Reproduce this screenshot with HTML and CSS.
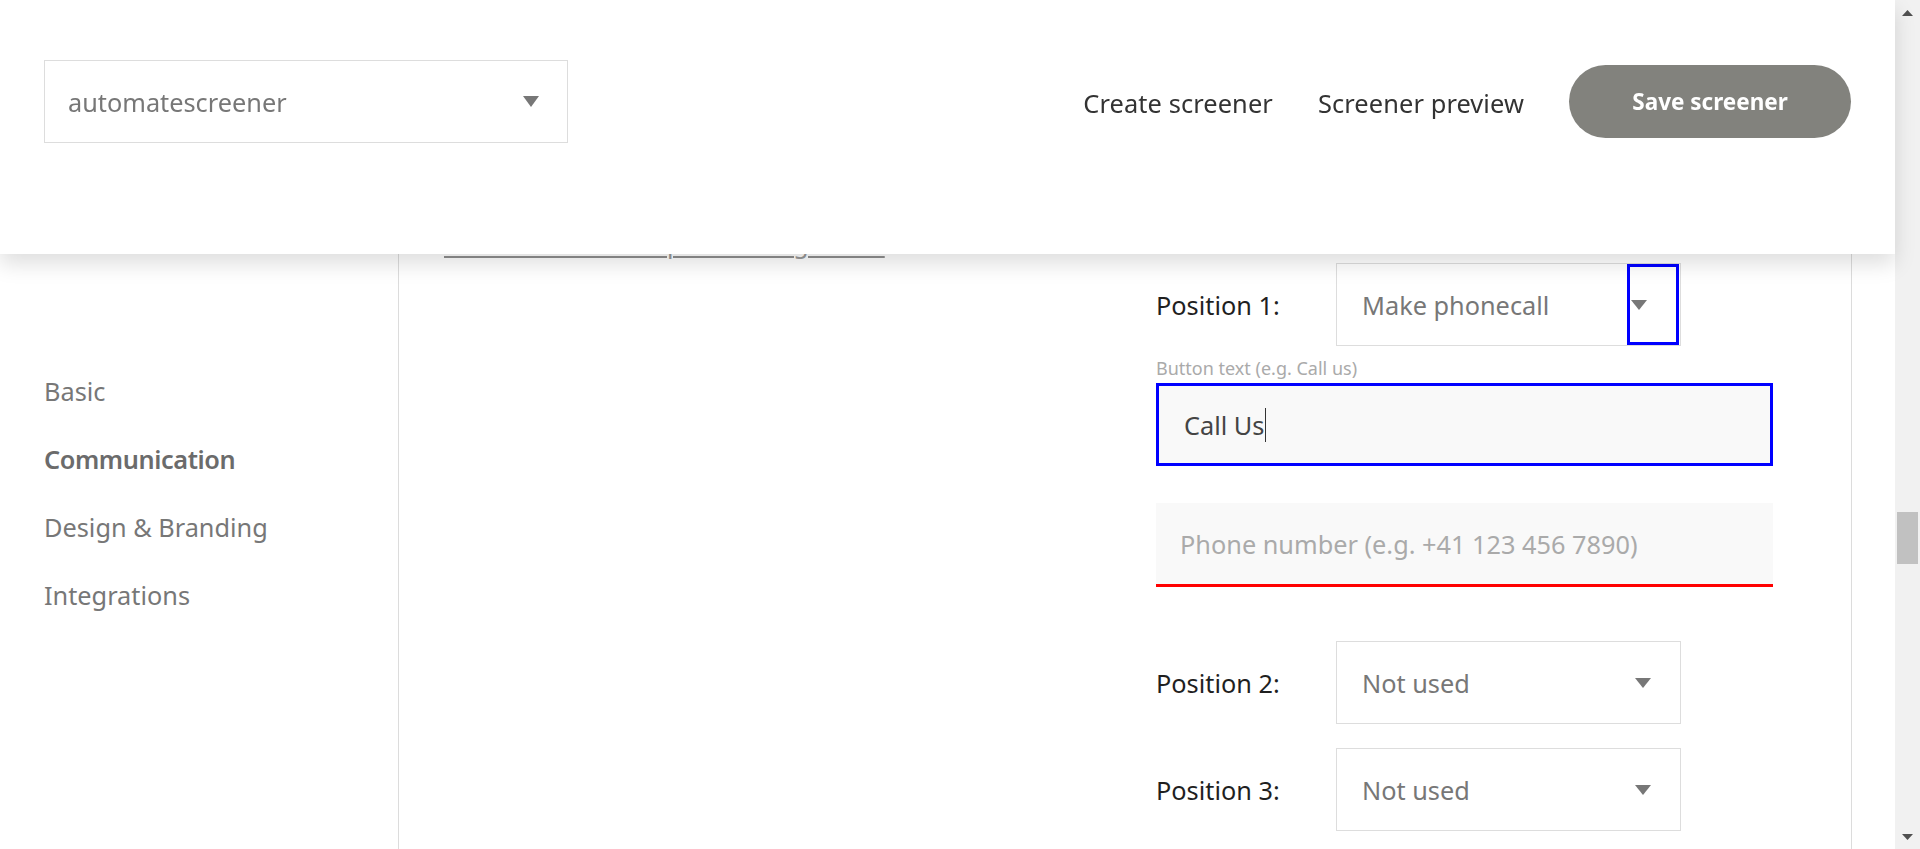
FILE: index.html
```html
<!DOCTYPE html>
<html lang="en">
<head>
<meta charset="utf-8">
<title>Screener editor – Communication</title>
<link rel="stylesheet" href="styles.css">
</head>
<body>
<div class="page">
  <nav class="sidenav">
    <a class="nav-item" href="#">Basic</a>
    <a class="nav-item active" href="#">Communication</a>
    <a class="nav-item" href="#">Design &amp; Branding</a>
    <a class="nav-item" href="#">Integrations</a>
  </nav>

  <main class="main">
    <div class="preview-col">
      <a class="help-link" href="#">Learn more about phone usage here</a>
    </div>

    <form class="form-col">
      <div class="pos-row">
        <span class="pos-label">Position 1:</span>
        <div class="select">
          <span class="select-value">Make phonecall</span>
          <span class="arrow-box focused">
            <svg class="arrow" width="16" height="10" viewBox="0 0 16 10"><polygon points="0,0 16,0 8,10"/></svg>
          </span>
        </div>
      </div>

      <label class="field-label">Button text (e.g. Call us)</label>
      <div class="text-input focused"><span class="typed">Call Us</span><span class="caret"></span></div>

      <input class="text-input invalid" type="text" placeholder="Phone number (e.g. +41 123 456 7890)">

      <div class="pos-row row-2">
        <span class="pos-label">Position 2:</span>
        <div class="select">
          <span class="select-value">Not used</span>
          <span class="arrow-box">
            <svg class="arrow" width="16" height="10" viewBox="0 0 16 10"><polygon points="0,0 16,0 8,10"/></svg>
          </span>
        </div>
      </div>

      <div class="pos-row row-3">
        <span class="pos-label">Position 3:</span>
        <div class="select">
          <span class="select-value">Not used</span>
          <span class="arrow-box">
            <svg class="arrow" width="16" height="10" viewBox="0 0 16 10"><polygon points="0,0 16,0 8,10"/></svg>
          </span>
        </div>
      </div>
    </form>
  </main>

  <div class="gutter"></div>

  <div class="scrollbar">
    <div class="sb-btn">
      <svg width="11" height="6" viewBox="0 0 11 6"><polygon points="0,6 11,6 5.5,0"/></svg>
    </div>
    <div class="sb-track"><div class="sb-thumb"></div></div>
    <div class="sb-btn">
      <svg width="11" height="6" viewBox="0 0 11 6"><polygon points="0,0 11,0 5.5,6"/></svg>
    </div>
  </div>
</div>

<header class="topbar">
  <div class="header-select">
    <span>automatescreener</span>
    <svg class="arrow" width="16" height="11" viewBox="0 0 16 11"><polygon points="0,0 16,0 8,11"/></svg>
  </div>
  <div class="header-actions">
    <a class="header-link" href="#">Create screener</a>
    <a class="header-link" href="#">Screener preview</a>
    <button class="save-btn" type="button">Save screener</button>
  </div>
</header>
</body>
</html>
```

FILE: styles.css
```css
html, body {
  margin: 0;
  padding: 0;
}

body {
  font-family: "Noto Sans", "Open Sans", sans-serif;
  background: #ffffff;
  overflow: hidden;
  height: 849px;
}

a {
  text-decoration: none;
}

.page {
  display: flex;
  height: 849px;
}

/* ---------- left navigation ---------- */
.sidenav {
  width: 398px;
  flex: none;
  border-right: 1px solid #dcdcdc;
  display: flex;
  flex-direction: column;
  padding-top: 357px;
}

.nav-item {
  padding-left: 44px;
  font-size: 25.3px;
  line-height: 68px;
  color: #777777;
}

.nav-item.active {
  font-weight: 600;
  color: #6b6b6b;
  letter-spacing: -0.4px;
}

/* ---------- main area ---------- */
.main {
  width: 1453px;
  flex: none;
  box-sizing: border-box;
  border-right: 1px solid #dcdcdc;
  padding: 0 78px 0 45px;
  display: grid;
  grid-template-columns: 667px 617px;
  column-gap: 45px;
  align-content: start;
}

.preview-col {
  padding-top: 226px;
}

.help-link {
  display: inline-block;
  font-size: 25px;
  line-height: 34px;
  letter-spacing: 0.3px;
  color: #999999;
  text-decoration: underline;
  text-decoration-thickness: 2px;
  text-underline-offset: 2.5px;
  text-decoration-color: #8f8f8f;
}

.form-col {
  margin: 0;
  padding-top: 263px;
  display: flex;
  flex-direction: column;
}

.pos-row {
  display: flex;
  align-items: center;
}

.row-2 {
  margin-top: 54px;
}

.row-3 {
  margin-top: 24px;
}

.pos-label {
  width: 180px;
  flex: none;
  font-size: 25.3px;
  color: #1f1f1f;
}

.select {
  width: 345px;
  height: 83px;
  box-sizing: border-box;
  border: 1px solid #dddddd;
  background: #ffffff;
  padding-left: 25px;
  display: flex;
  align-items: stretch;
}

.select-value {
  flex: 1;
  display: flex;
  align-items: center;
  font-size: 25.3px;
  color: #777777;
}

.arrow-box {
  width: 52px;
  flex: none;
  margin-right: 1px;
  box-sizing: border-box;
  display: flex;
  align-items: center;
  padding-left: 8px;
}

.arrow-box.focused {
  border: 3px solid #0000ff;
  padding-left: 1px;
}

.arrow {
  display: block;
  fill: #777777;
}

.field-label {
  margin-top: 10px;
  margin-bottom: 2px;
  font-size: 18px;
  line-height: 25px;
  color: #aaaaaa;
}

.text-input {
  width: 617px;
  height: 83px;
  box-sizing: border-box;
  border: 0;
  background: #f9f9f9;
  font-family: "Noto Sans", "Open Sans", sans-serif;
  font-size: 25.3px;
  color: #444444;
  padding: 0 0 0 25px;
  display: flex;
  align-items: center;
  outline: none;
}

.text-input.focused {
  border: 3px solid #0000ff;
}

.caret {
  width: 1px;
  height: 34px;
  background: #333333;
  margin-left: 1px;
}

.text-input.invalid {
  margin-top: 37px;
  height: 84px;
  padding-left: 24px;
  border-bottom: 3px solid #ff0000;
}

.text-input::placeholder {
  color: #aaaaaa;
  opacity: 1;
}

.gutter {
  width: 43px;
  flex: none;
}

/* ---------- scrollbar ---------- */
.scrollbar {
  width: 25px;
  flex: none;
  background: #f1f1f1;
  display: flex;
  flex-direction: column;
}

.sb-btn {
  height: 25px;
  display: flex;
  align-items: center;
  justify-content: center;
}

.sb-btn svg {
  display: block;
  fill: #505050;
}

.sb-track {
  flex: 1;
}

.sb-thumb {
  margin: 487px 2px 0;
  height: 52px;
  background: #c1c1c1;
}

/* ---------- fixed top bar ---------- */
.topbar {
  position: fixed;
  top: 0;
  left: 0;
  width: 1895px;
  height: 254px;
  box-sizing: border-box;
  padding: 60px 44px 0;
  background: #ffffff;
  box-shadow: 0 10px 20px rgba(0, 0, 0, 0.13);
  display: flex;
  align-items: flex-start;
  z-index: 10;
}

.header-select {
  width: 524px;
  height: 83px;
  box-sizing: border-box;
  border: 1px solid #dddddd;
  padding: 0 28px 0 23px;
  display: flex;
  align-items: center;
  justify-content: space-between;
  font-size: 25.3px;
  color: #777777;
}

.header-actions {
  margin-left: auto;
  height: 83px;
  display: flex;
  align-items: center;
  gap: 45px;
}

.header-link {
  font-size: 25.4px;
  letter-spacing: 0.1px;
  line-height: 36px;
  padding-top: 2px;
  color: #333333;
}

.save-btn {
  width: 282px;
  height: 73px;
  border: 0;
  border-radius: 37px;
  background: #82827d;
  color: #ffffff;
  font-family: "Noto Sans", "Open Sans", sans-serif;
  font-size: 22.5px;
  font-weight: 700;
  padding: 0;
}
```
